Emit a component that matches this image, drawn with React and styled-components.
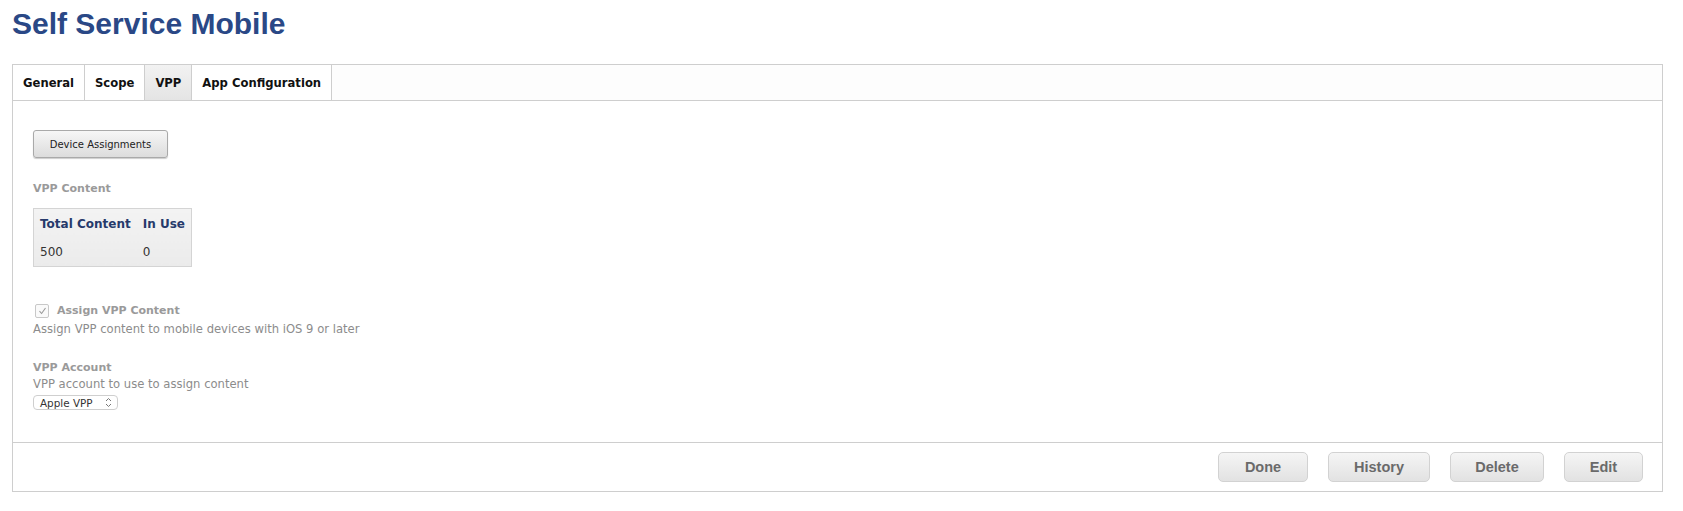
import React from 'react'
import styled, { createGlobalStyle } from 'styled-components'

const GlobalStyle = createGlobalStyle`
    body {
        margin: 0;
        background: #ffffff;
        font-family: "DejaVu Sans", "Liberation Sans", sans-serif;
    }
`

const Page = styled.div`
    padding: 0 20px 0 12px;
`

const Title = styled.h1`
    margin: 0;
    padding: 6px 0 0 0;
    height: 58px;
    line-height: 36px;
    font-family: "Liberation Sans", Arial, sans-serif;
    font-size: 30px;
    font-weight: 700;
    color: #2a4886;
`

const Panel = styled.div`
    border: 1px solid #cecece;
    background: #fff;
`

const TabBar = styled.div`
    display: flex;
    height: 35px;
    border-bottom: 1px solid #cecece;
    background: #fdfdfd;
`

const Tab = styled.div`
    display: flex;
    align-items: center;
    padding: 0 10px;
    border-right: 1px solid #cecece;
    font-size: 11.6px;
    font-weight: 700;
    color: #111;
    background: ${({ $active }) => ($active ? 'linear-gradient(#f2f2f2, #e4e4e4)' : '#fff')};
`

const Content = styled.div`
    padding: 29px 20px 32px 20px;
    display: flex;
    flex-direction: column;
    align-items: flex-start;
`

const ActionButton = styled.button`
    width: 135px;
    height: 28px;
    border: 1px solid #a9a9a9;
    border-radius: 3px;
    background: linear-gradient(#f6f6f6, #dcdcdc);
    box-shadow: 0 1px 1px rgba(0, 0, 0, 0.2);
    font-family: "DejaVu Sans", sans-serif;
    font-size: 10px;
    color: #222;
    padding: 0;
`

const Label = styled.div`
    font-size: 11px;
    font-weight: 700;
    line-height: 14px;
    color: #9a9a9a;
    margin-top: ${({ $top }) => $top || 0}px;
`

const Hint = styled.div`
    font-size: 11.6px;
    line-height: 14px;
    color: #8c8c8c;
    margin-top: ${({ $top }) => $top || 0}px;
`

const Table = styled.table`
    margin-top: 12px;
    border-collapse: collapse;
    border: 1px solid #d4d4d4;
    background: linear-gradient(#f3f3f3, #ebebeb);
`

const Th = styled.th`
    height: 29px;
    padding: 0 6px;
    text-align: left;
    font-size: 12px;
    font-weight: 700;
    color: #263a6b;
`

const Td = styled.td`
    height: 28px;
    padding: 0 6px;
    font-size: 12px;
    color: #333;
`

const CheckRow = styled.div`
    display: flex;
    align-items: center;
    margin-top: 37px;
    height: 14px;
    padding-left: 2px;
`

const Box = styled.span`
    width: 12px;
    height: 12px;
    border: 1px solid #c8c8c8;
    border-radius: 2px;
    background: #fafafa;
    display: flex;
    align-items: center;
    justify-content: center;
    margin-right: 8px;
`

const Select = styled.div`
    margin-top: 4px;
    width: 77px;
    height: 13px;
    border: 1px solid #cfcfcf;
    border-radius: 4px;
    display: flex;
    align-items: center;
    justify-content: space-between;
    padding: 0 0 0 6px;
    font-size: 10.4px;
    color: #333;
    box-sizing: content-box;
`

const Footer = styled.div`
    display: flex;
    justify-content: flex-end;
    gap: 20px;
    padding: 9px 19px;
    border-top: 1px solid #cecece;
`

const FooterButton = styled.button`
    width: ${({ $w }) => $w}px;
    height: 30px;
    border: 1px solid #d2d2d2;
    border-radius: 5px;
    background: linear-gradient(#f5f5f5, #e2e2e2);
    font-family: "Liberation Sans", Arial, sans-serif;
    font-size: 14.5px;
    font-weight: 700;
    color: #6a6a6a;
    padding: 0;
`

function Chevrons () {
    return (
        <svg width="9" height="11" viewBox="0 0 9 11" style={{ marginRight: 4 }}>
            <path d="M2 4 L4.5 1.5 L7 4 M2 7 L4.5 9.5 L7 7" fill="none" stroke="#777" strokeWidth="1" />
        </svg>
    )
}

function App () {
    return (
        <Page>
            <GlobalStyle />
            <Title>Self Service Mobile</Title>
            <Panel>
                <TabBar>
                    <Tab>General</Tab>
                    <Tab>Scope</Tab>
                    <Tab $active>VPP</Tab>
                    <Tab>App Configuration</Tab>
                </TabBar>
                <Content>
                    <ActionButton>Device Assignments</ActionButton>
                    <Label $top={24}>VPP Content</Label>
                    <Table>
                        <thead>
                            <tr>
                                <Th>Total Content</Th>
                                <Th>In Use</Th>
                            </tr>
                        </thead>
                        <tbody>
                            <tr>
                                <Td>500</Td>
                                <Td>0</Td>
                            </tr>
                        </tbody>
                    </Table>
                    <CheckRow>
                        <Box>
                            <svg width="9" height="8" viewBox="0 0 9 8">
                                <path d="M1.5 4.2 L3.6 6.5 L7.5 1" fill="none" stroke="#999" strokeWidth="1.1" />
                            </svg>
                        </Box>
                        <Label>Assign VPP Content</Label>
                    </CheckRow>
                    <Hint $top={4}>Assign VPP content to mobile devices with iOS 9 or later</Hint>
                    <Label $top={25}>VPP Account</Label>
                    <Hint $top={2}>VPP account to use to assign content</Hint>
                    <Select>
                        Apple VPP
                        <Chevrons />
                    </Select>
                </Content>
                <Footer>
                    <FooterButton $w={90}>Done</FooterButton>
                    <FooterButton $w={102}>History</FooterButton>
                    <FooterButton $w={94}>Delete</FooterButton>
                    <FooterButton $w={79}>Edit</FooterButton>
                </Footer>
            </Panel>
        </Page>
    )
}

export default App
